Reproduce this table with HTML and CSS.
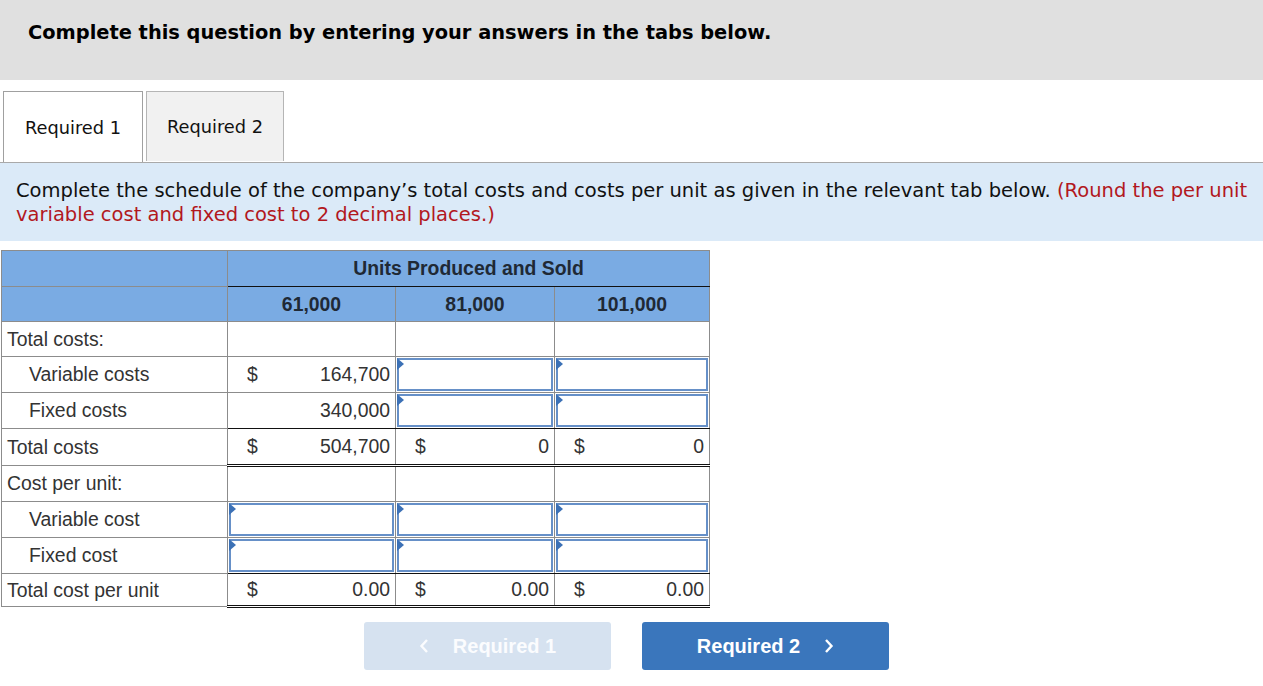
FILE: index.html
```html
<!DOCTYPE html>
<html>
<head>
<meta charset="utf-8">
<link rel="stylesheet" href="styles.css">
</head>
<body>
<div class="banner">Complete this question by entering your answers in the tabs below.</div>
<div class="tabs">
  <div class="tab active">Required 1</div>
  <div class="tab">Required 2</div>
</div>
<div class="info">Complete the schedule of the company’s total costs and costs per unit as given in the relevant tab below. <span class="red">(Round the per unit variable cost and fixed cost to 2 decimal places.)</span></div>
<table class="sched">
  <colgroup><col class="c1"><col class="c2"><col class="c3"><col class="c4"></colgroup>
  <tr class="h1"><th></th><th colspan="3" class="dk">Units Produced and Sold</th></tr>
  <tr class="h2"><th></th><th>61,000</th><th>81,000</th><th>101,000</th></tr>
  <tr><td class="lbl">Total costs:</td><td></td><td></td><td></td></tr>
  <tr><td class="lbl ind">Variable costs</td><td><div class="num"><span>$</span><span>164,700</span></div></td><td class="in"><div class="box"></div></td><td class="in"><div class="box"></div></td></tr>
  <tr class="sum"><td class="lbl ind">Fixed costs</td><td><div class="num"><span></span><span>340,000</span></div></td><td class="in"><div class="box"></div></td><td class="in"><div class="box"></div></td></tr>
  <tr class="tot"><td class="lbl">Total costs</td><td><div class="num"><span>$</span><span>504,700</span></div></td><td><div class="num"><span>$</span><span>0</span></div></td><td><div class="num"><span>$</span><span>0</span></div></td></tr>
  <tr><td class="lbl">Cost per unit:</td><td></td><td></td><td></td></tr>
  <tr><td class="lbl ind">Variable cost</td><td class="in"><div class="box"></div></td><td class="in"><div class="box"></div></td><td class="in"><div class="box"></div></td></tr>
  <tr class="sum"><td class="lbl ind">Fixed cost</td><td class="in"><div class="box"></div></td><td class="in"><div class="box"></div></td><td class="in"><div class="box"></div></td></tr>
  <tr class="tot last"><td class="lbl">Total cost per unit</td><td><div class="num"><span>$</span><span>0.00</span></div></td><td><div class="num"><span>$</span><span>0.00</span></div></td><td><div class="num"><span>$</span><span>0.00</span></div></td></tr>
</table>
<div class="nav">
  <div class="btn prev"><svg class="chev" width="10" height="16" viewBox="0 0 10 16"><path d="M8 2 L2.5 8 L8 14" fill="none" stroke="currentColor" stroke-width="2.4"/></svg>Required 1</div>
  <div class="btn next">Required 2<svg class="chev" width="10" height="16" viewBox="0 0 10 16"><path d="M2 2 L7.5 8 L2 14" fill="none" stroke="currentColor" stroke-width="2.4"/></svg></div>
</div>
</body>
</html>
```
FILE: styles.css
```css
html, body { margin: 0; padding: 0; background: #fff; }
body { font-family: "DejaVu Sans", Verdana, sans-serif; color: #000; }

.banner {
  background: #e0e0e0;
  height: 80px;
  box-sizing: border-box;
  padding: 21px 0 0 28px;
  font-weight: bold;
  font-size: 19.4px;
}

.tabs {
  display: flex;
  gap: 3px;
  padding: 11px 0 0 3px;
  border-bottom: 1px solid #a9a9a9;
  height: 71px;
}
.tab {
  width: 138px;
  box-sizing: border-box;
  border: 1px solid #b5b5b5;
  border-bottom: none;
  background: #f1f1f1;
  font-size: 17.8px;
  display: flex;
  align-items: center;
  justify-content: center;
  color: #111;
  height: 70px;
}
.tab.active {
  background: #fff;
  width: 140px;
  border-color: #a0a0a0;
  height: 71px;
  margin-bottom: -1px;
}

.info {
  background: #dbeaf8;
  font-size: 19.5px;
  line-height: 24px;
  padding: 16px 8px 14px 16px;
  color: #111;
}
.red { color: #b2181e; }

.sched {
  margin: 9px 0 0 1px;
  border-collapse: collapse;
  table-layout: fixed;
  width: 709px;
  font-family: "Liberation Sans", Arial, sans-serif;
  font-size: 19.4px;
  color: #333;
}
.c1 { width: 226px; }
.c2 { width: 168px; }
.c3 { width: 159px; }
.c4 { width: 155px; }
.sched th, .sched td {
  border: 1px solid #8c8c8c;
  padding: 0;
}
.sched th {
  background: #7aabe3;
  color: #1f2935;
  font-weight: bold;
  text-align: center;
}
.h1 th { height: 35px; }
.h2 th { height: 34px; }
.h1 th.dk { border-bottom: 1px solid #111; }
.h2 th + th { border-top: 1px solid #111; }
.sched td { height: 34px; }
.lbl { padding-left: 5px !important; color: #333; }
.lbl.ind { padding-left: 27px !important; }

.sum td + td { border-bottom: 1px solid #111; }
.tot td + td { border-bottom: 3px double #111; height: 35px; }
.tot.last td { height: 31px; }

.num {
  display: flex;
  justify-content: space-between;
  padding: 0 5px 0 19px;
}

.sched td.in { padding: 1px; height: 33px; }
.box {
  position: relative;
  height: 33px;
  box-sizing: border-box;
  border: 2px solid #6690c8;
  background: #fff;
}
.box::before {
  content: "";
  position: absolute;
  left: -2px;
  top: -2px;
  border-left: 7px solid #3c71b6;
  border-top: 6px solid transparent;
  border-bottom: 6px solid transparent;
}

.nav {
  display: flex;
  gap: 31px;
  padding: 14px 0 0 364px;
}
.btn {
  width: 247px;
  height: 48px;
  border-radius: 3px;
  display: flex;
  align-items: center;
  justify-content: center;
  font-family: "Liberation Sans", Arial, sans-serif;
  font-weight: bold;
  font-size: 20px;
  color: #fff;
}
.prev { background: #d6e2f0; color: #fbfcfe; }
.next { background: #3a76bc; }
.chev { display: block; }
.prev .chev { margin-right: 24px; }
.next .chev { margin-left: 24px; }
```
